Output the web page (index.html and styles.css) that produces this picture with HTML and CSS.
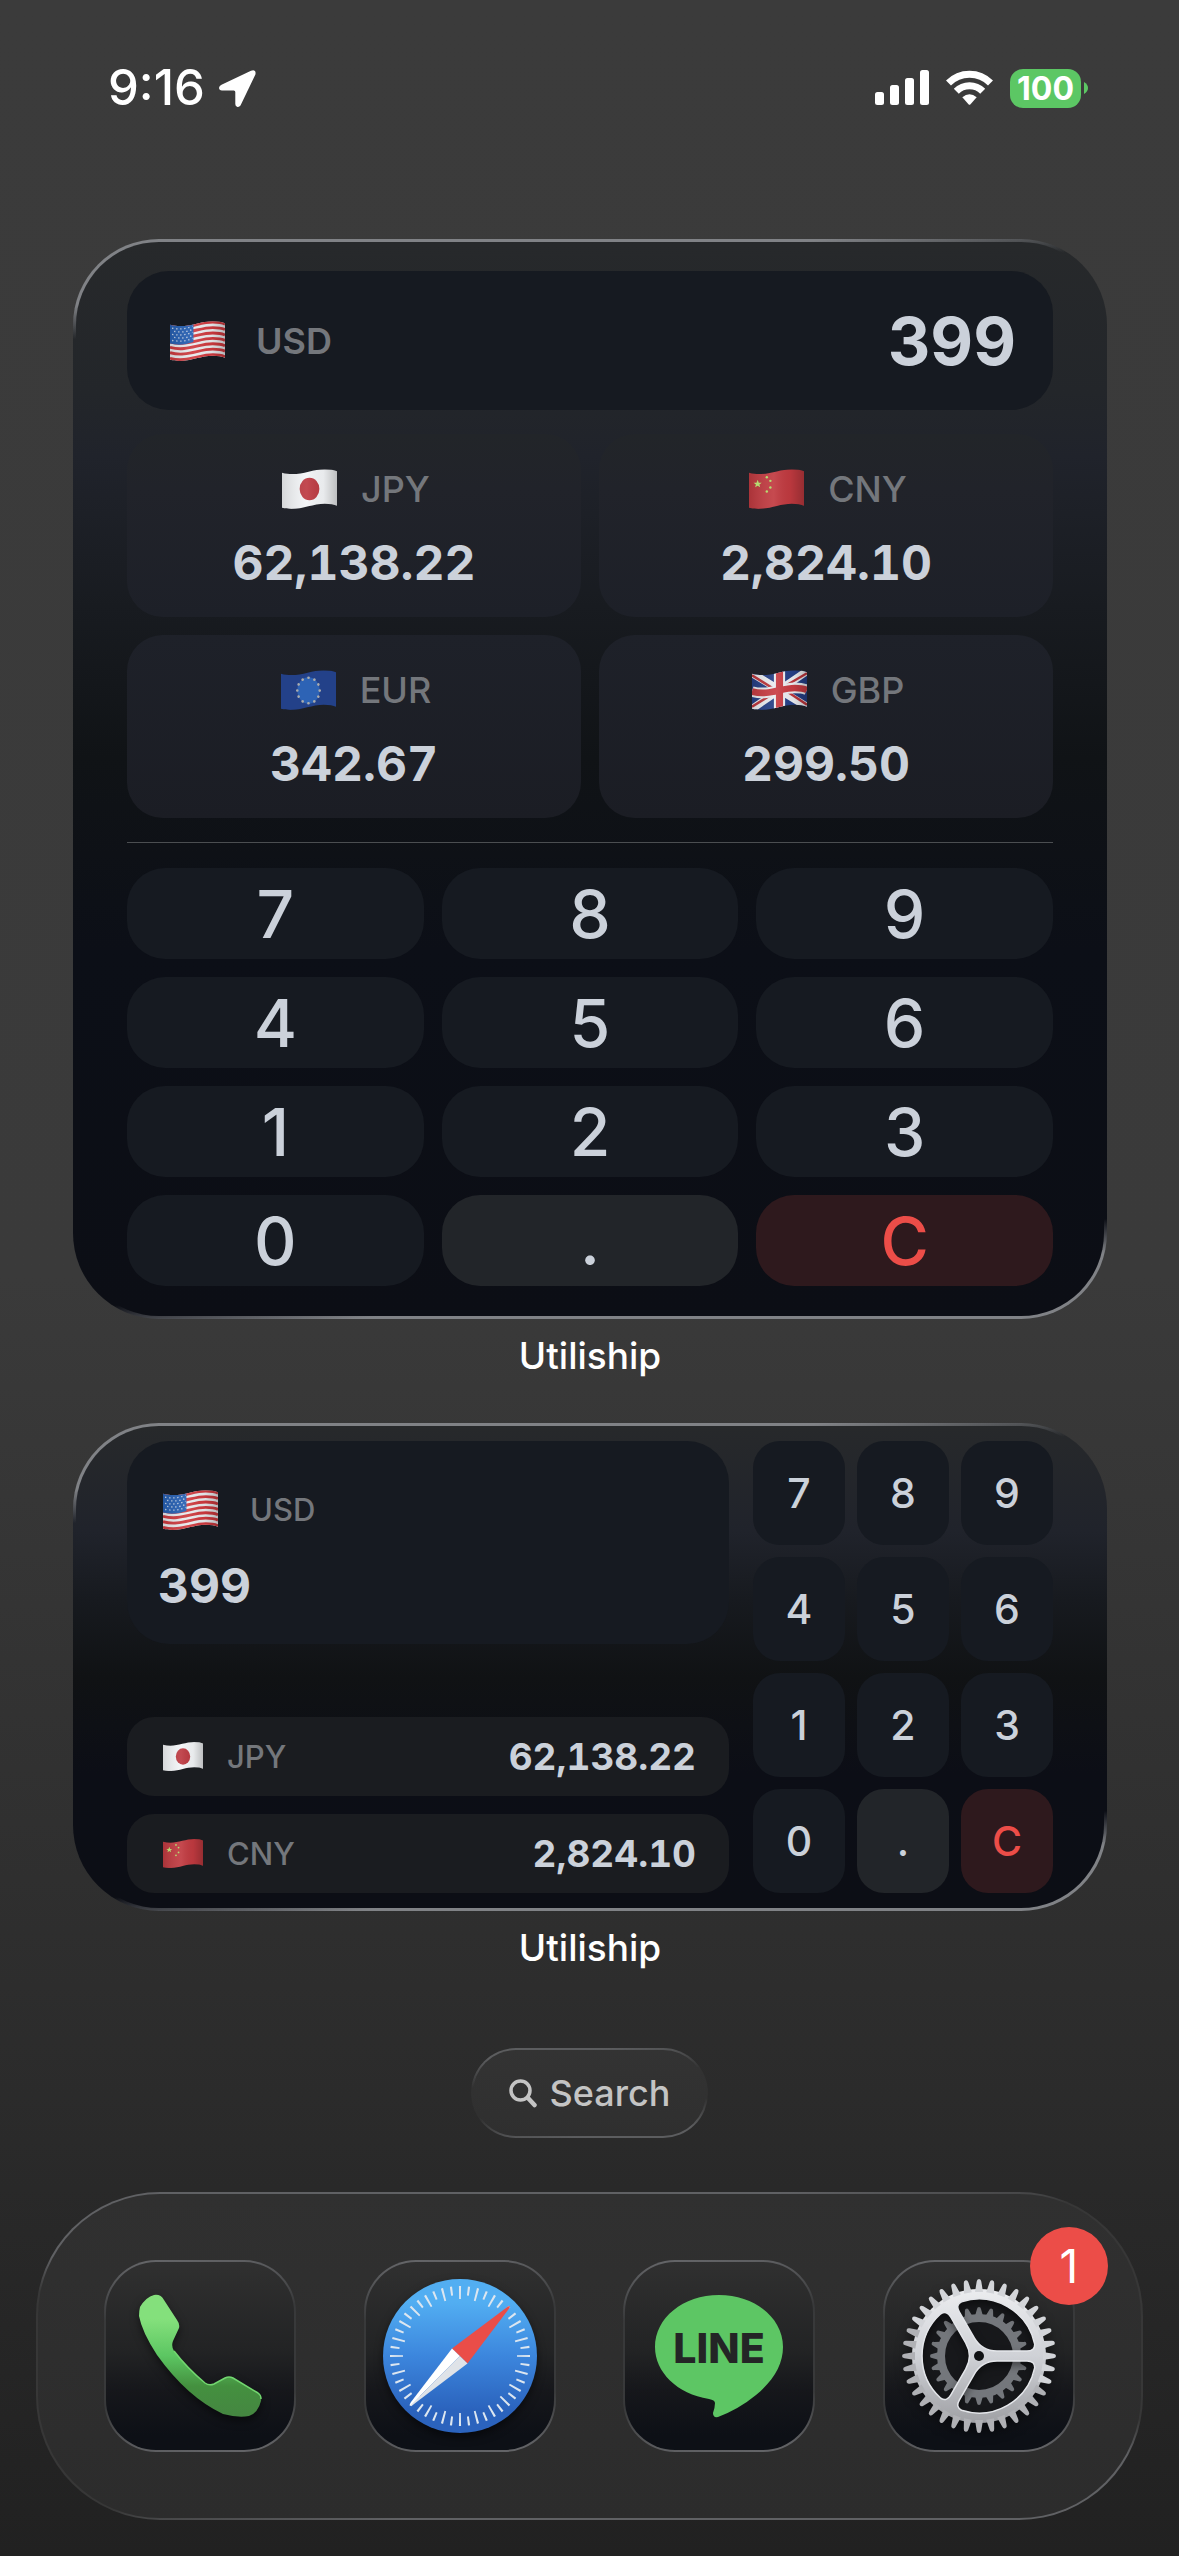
FILE: index.html
```html
<!DOCTYPE html>
<html lang="en">
<head>
<meta charset="utf-8">
<meta name="viewport" content="width=device-width, initial-scale=1">
<title>Home Screen</title>
<link rel="stylesheet" href="styles.css">
</head>
<body>
<svg class="defs" aria-hidden="true">
  <defs>
    <clipPath id="wave"><path d="M0 3.5C16 8 28 0 42 0Q50 0 54 2V36Q50 34 42 34C28 34 16 42 0 38Z"/></clipPath>
    <linearGradient id="fold"><stop offset="0" stop-color="#000" stop-opacity=".12"/><stop offset=".45" stop-color="#fff" stop-opacity=".08"/><stop offset=".75" stop-color="#000" stop-opacity=".04"/><stop offset="1" stop-color="#000" stop-opacity=".22"/></linearGradient>
    <path id="stripe" d="M0 0C16 4.500 28-3.500 42-3.500Q50-3.500 54-1.500"/>
    <path id="star" d="M0-4L1.100-1.200 4-1.200 1.700.6 2.500 3.400 0 1.700-2.500 3.400-1.700.6-4-1.200-1.100-1.200Z"/>
    <symbol id="flag-us" viewBox="0 0 54 39">
      <g clip-path="url(#wave)">
        <rect width="54" height="39" fill="#e9ebee"/>
        <g fill="none" stroke="#cf3a3f" stroke-width="2.800">
          <use href="#stripe" y="4.500"/><use href="#stripe" y="9.800"/><use href="#stripe" y="15.100"/><use href="#stripe" y="20.400"/><use href="#stripe" y="25.700"/><use href="#stripe" y="31"/><use href="#stripe" y="36.500"/>
        </g>
        <path d="M0 2C8 6 16 5 23 2V20.500C16 23 8 24 0 22Z" fill="#2660b4"/>
        <g fill="none" stroke="#c5d3e8" stroke-width="1.300" stroke-dasharray="1.300 2.700">
          <path d="M2 7C9 8 15 8 22 5"/><path d="M4 10C10 11 16 11 22 8"/><path d="M2 13C9 14 15 14 22 11"/><path d="M4 16C10 17 16 17 22 14"/><path d="M2 19C9 20 15 20 22 17"/>
        </g>
        <rect width="54" height="39" fill="url(#fold)"/>
      </g>
    </symbol>
    <symbol id="flag-jp" viewBox="0 0 54 39">
      <g clip-path="url(#wave)"><rect width="54" height="39" fill="#f3f5f7"/><ellipse cx="27" cy="19.500" rx="9.700" ry="11" fill="#bd3a42"/><rect width="54" height="39" fill="url(#fold)"/></g>
    </symbol>
    <symbol id="flag-cn" viewBox="0 0 54 39">
      <g clip-path="url(#wave)"><rect width="54" height="39" fill="#c13a40"/><rect width="54" height="39" fill="url(#fold)"/>
        <g fill="#b5dc72"><use href="#star" x="8.500" y="14.500"/><circle cx="17.500" cy="8" r="1.200"/><circle cx="21" cy="11.500" r="1.200"/><circle cx="21" cy="18" r="1.200"/><circle cx="17.500" cy="22" r="1.200"/></g></g>
    </symbol>
    <symbol id="flag-eu" viewBox="0 0 54 39">
      <g clip-path="url(#wave)"><rect width="54" height="39" fill="#234189"/><ellipse cx="27" cy="20" rx="11" ry="13" fill="#2d63b5"/>
        <ellipse cx="27" cy="20" rx="11" ry="12.500" fill="none" stroke="#a9abad" stroke-width="2.600" stroke-linecap="round" pathLength="120" stroke-dasharray=".1 9.900"/></g>
    </symbol>
    <symbol id="flag-gb" viewBox="0 0 54 39">
      <g clip-path="url(#wave)"><rect width="54" height="39" fill="#253f86"/>
        <path d="M0 3L54 36M0 38L54 1" stroke="#eceef1" stroke-width="7.500"/>
        <path d="M0 5L24 20M30 18L54 34M0 36L24 21M30 17L54 3" stroke="#bd363c" stroke-width="2.400"/>
        <path d="M27-1V40" stroke="#eceef1" stroke-width="11"/><use href="#stripe" y="21" fill="none" stroke="#eceef1" stroke-width="10.500"/>
        <path d="M27-1V40" stroke="#c93c42" stroke-width="7"/><use href="#stripe" y="21" fill="none" stroke="#c93c42" stroke-width="6.500"/>
        <rect width="54" height="39" fill="url(#fold)"/></g>
    </symbol>
  </defs>
</svg>

<div class="screen">
  <header class="status">
    <div class="status-side status-time">
      <time class="clock">9:16</time>
      <svg class="location" viewBox="0 0 37 37"><path fill="#fff" d="M2.500 14.800L32 .800Q37.500-1 36.400 4.500L21.500 35.500Q20 37.500 18 36.800Q16.300 36.300 16.300 34V22Q16.300 20.500 14.800 20.500H3Q-.2 20 .1 17.500Q.3 15.800 2.500 14.800Z"/></svg>
    </div>
    <div class="status-side">
      <svg class="signal" viewBox="0 0 54 36" fill="#fff"><rect y="22" width="9" height="13" rx="2.500"/><rect x="15" y="15" width="9" height="20" rx="2.500"/><rect x="30" y="8" width="9" height="27" rx="2.500"/><rect x="45" width="9" height="35" rx="2.500"/></svg>
      <svg class="wifi" viewBox="0 0 47 36"><g fill="none" stroke="#fff" stroke-width="7"><path d="M2.500 13A29.500 29.500 0 0 1 44.500 13"/><path d="M10.300 21.300A18.500 18.500 0 0 1 36.700 21.300"/></g><path fill="#fff" d="M16.300 27.300Q23.500 21.300 30.700 27.300L24.500 34.200Q23.500 35.200 22.500 34.200Z"/></svg>
      <div class="battery"><span class="battery-level">100</span><svg class="battery-tip" viewBox="0 0 4 12"><path fill="#5cc764" d="M0 0Q4 2.500 4 6T0 12Z"/></svg></div>
    </div>
  </header>

  <main class="widgets">
    <section class="widget-block">
      <div class="widget glass widget-large">
        <div class="base-card">
          <svg class="flag"><use href="#flag-us"/></svg>
          <span class="code code-strong">USD</span>
          <output class="amount">399</output>
        </div>
        <div class="rates">
          <div class="rate"><div class="rate-name"><svg class="flag"><use href="#flag-jp"/></svg><span class="code">JPY</span></div><span class="rate-value">62,138.22</span></div>
          <div class="rate"><div class="rate-name"><svg class="flag"><use href="#flag-cn"/></svg><span class="code">CNY</span></div><span class="rate-value">2,824.10</span></div>
          <div class="rate rate-low"><div class="rate-name"><svg class="flag"><use href="#flag-eu"/></svg><span class="code">EUR</span></div><span class="rate-value">342.67</span></div>
          <div class="rate rate-low"><div class="rate-name"><svg class="flag"><use href="#flag-gb"/></svg><span class="code">GBP</span></div><span class="rate-value">299.50</span></div>
        </div>
        <hr class="divider">
        <div class="keypad">
          <button class="key">7</button><button class="key">8</button><button class="key">9</button>
          <button class="key">4</button><button class="key">5</button><button class="key">6</button>
          <button class="key">1</button><button class="key">2</button><button class="key">3</button>
          <button class="key">0</button><button class="key key-dot">.</button><button class="key key-clear">C</button>
        </div>
      </div>
      <p class="widget-label">Utiliship</p>
    </section>

    <section class="widget-block">
      <div class="widget glass widget-medium">
        <div class="converter">
          <div class="base-panel">
            <div class="base-name"><svg class="flag"><use href="#flag-us"/></svg><span class="code code-small">USD</span></div>
            <output class="rate-value">399</output>
          </div>
          <div class="rows">
            <div class="row"><svg class="flag flag-small"><use href="#flag-jp"/></svg><span class="code code-small">JPY</span><span class="row-value">62,138.22</span></div>
            <div class="row"><svg class="flag flag-small"><use href="#flag-cn"/></svg><span class="code code-small">CNY</span><span class="row-value">2,824.10</span></div>
          </div>
        </div>
        <div class="keypad keypad-compact">
          <button class="key">7</button><button class="key">8</button><button class="key">9</button>
          <button class="key">4</button><button class="key">5</button><button class="key">6</button>
          <button class="key">1</button><button class="key">2</button><button class="key">3</button>
          <button class="key">0</button><button class="key key-dot">.</button><button class="key key-clear">C</button>
        </div>
      </div>
      <p class="widget-label">Utiliship</p>
    </section>
  </main>

  <button class="search glass">
    <svg class="search-icon" viewBox="0 0 28 29" fill="none" stroke="#c4c4c4" stroke-linecap="round"><circle cx="11.500" cy="11.500" r="9.500" stroke-width="3.500"/><path d="M19 19L25.500 26" stroke-width="4.500"/></svg>
    <span>Search</span>
  </button>

  <nav class="dock glass" aria-label="Dock">
    <a class="app glass" href="#phone" aria-label="Phone">
      <svg class="app-art" viewBox="0 0 192 192">
        <defs><linearGradient id="phone-fill" x1="0" y1="0" x2="0" y2="1"><stop offset=".2" stop-color="#84e07c"/><stop offset=".5" stop-color="#5cc662"/><stop offset=".75" stop-color="#44903f"/><stop offset="1" stop-color="#458641"/></linearGradient></defs>
        <path class="lift" fill="url(#phone-fill)" d="M36 47Q42 37 50 35Q57 34 60 40L73 60Q76 64 75 68L69 81Q67 86 70 91Q83 108 101 123Q105 126 110 124L121 118Q125 116 129 118L154 133Q158 135 157 141Q154 153 145 156Q134 158 119 154Q83 137 53 95Q38 72 35 56Q35 51 36 47Z"/>
        <path fill="none" stroke="#72d66f" stroke-width="1.500" d="M70 91Q83 108 101 123Q105 126 110 124L121 118Q125 116 129 118L154 133Q157 135 157 139"/>
      </svg>
    </a>
    <a class="app glass" href="#safari" aria-label="Safari">
      <svg class="app-art" viewBox="0 0 192 192">
        <defs><linearGradient id="sky" x1="0" y1="0" x2="0" y2="1"><stop offset=".15" stop-color="#52aef2"/><stop offset=".5" stop-color="#3c86dd"/><stop offset=".85" stop-color="#2b63bd"/></linearGradient></defs>
        <circle class="lift" cx="96" cy="96" r="77" fill="url(#sky)"/>
        <g fill="none" stroke="#dce6f0"><circle cx="96" cy="96" r="63.500" stroke-width="13" pathLength="240" stroke-dasharray="1.200 8.800" stroke-dashoffset=".6"/><circle cx="96" cy="96" r="65.500" stroke-width="9" pathLength="240" stroke-dasharray="1.200 8.800" stroke-dashoffset="5.600"/></g>
        <path fill="#ea4d48" d="M144 46.500Q146.500 45 145.500 48L103.500 103.500 88 88.500Z"/>
        <path fill="#fff" d="M88 88.500L95.800 96 46 146Q45 145.500 47 142Z"/><path fill="#dfe3e8" d="M95.800 96L103.500 103.500 48 145.500 46 146Z"/>
      </svg>
    </a>
    <a class="app glass" href="#line" aria-label="LINE">
      <svg class="app-art" viewBox="0 0 192 192">
        <path fill="#5dc664" d="M96 35C132 35 160 58 160 87C160 104 151 120 133 135Q116 149 95 157Q90 158 90 153Q92 147 92 143Q92 140 86 139C54 134 32 112 32 87C32 58 60 35 96 35Z"/>
        <text class="line-logo" x="96" y="103" text-anchor="middle">LINE</text>
      </svg>
    </a>
    <a class="app glass" href="#settings" aria-label="Settings, 1 notification">
      <svg class="app-art" viewBox="-96 -96 192 192">
        <defs>
          <linearGradient id="steel" gradientUnits="userSpaceOnUse" x1="0" y1="-77" x2="0" y2="77"><stop offset="0" stop-color="#f0f1f3"/><stop offset=".5" stop-color="#cfd1d6"/><stop offset="1" stop-color="#98999d"/></linearGradient>
          <path id="tooth" d="M-4-64L-2.300-74.500Q-2-77 0-77T2.300-74.500L4-64Z"/>
          <g id="teeth6"><use href="#tooth"/><use href="#tooth" transform="rotate(10)"/><use href="#tooth" transform="rotate(20)"/><use href="#tooth" transform="rotate(30)"/><use href="#tooth" transform="rotate(40)"/><use href="#tooth" transform="rotate(50)"/></g>
          <path id="cog" d="M-4-40L-2-47Q-1.800-49 0-49T2-47L4-40Z"/>
          <g id="cog6"><use href="#cog"/><use href="#cog" transform="rotate(15)"/><use href="#cog" transform="rotate(30)"/><use href="#cog" transform="rotate(45)"/><use href="#cog" transform="rotate(60)"/><use href="#cog" transform="rotate(75)"/></g>
          <path id="opening" d="M18-5H48Q56-5 55.700-12A57 57 0 0 0-17.500-54.200Q-23.700-51-19.700-44.100L-4.700-18.100Q2.900-5 18-5Z"/>
          <mask id="spokes" maskUnits="userSpaceOnUse" x="-96" y="-96" width="192" height="192"><circle r="90" fill="#fff"/><use href="#opening"/><use href="#opening" transform="rotate(120)"/><use href="#opening" transform="rotate(240)"/><circle r="5"/></mask>
        </defs>
        <circle r="57" fill="#17181b"/>
        <g fill="#74777c"><use href="#cog6"/><use href="#cog6" transform="rotate(90)"/><use href="#cog6" transform="rotate(180)"/><use href="#cog6" transform="rotate(270)"/><circle r="38" fill="none" stroke="#74777c" stroke-width="8"/></g>
        <g class="lift"><g fill="url(#steel)" mask="url(#spokes)"><circle r="67"/><g fill="#d3d5d9"><use href="#teeth6"/><use href="#teeth6" transform="rotate(60)"/><use href="#teeth6" transform="rotate(300)"/></g><g fill="#b0b1b5"><use href="#teeth6" transform="rotate(120)"/><use href="#teeth6" transform="rotate(180)"/><use href="#teeth6" transform="rotate(240)"/></g></g></g>
        <g fill="none" stroke="#e4e6ea" stroke-width="1.500"><use href="#opening"/><use href="#opening" transform="rotate(120)"/><use href="#opening" transform="rotate(240)"/></g>
      </svg>
      <span class="badge">1</span>
    </a>
  </nav>
</div>
</body>
</html>
```
FILE: styles.css
```css
* { box-sizing: border-box; }

body {
  margin: 0;
  background: #222;
  color: #cbd1da;
  font-family: Inter, "Liberation Sans", sans-serif;
}

button {
  border: 0;
  padding: 0;
  color: inherit;
  font: inherit;
}

.defs {
  position: absolute;
  width: 0;
  height: 0;
}

.screen {
  display: flex;
  flex-direction: column;
  min-height: 100vh;
  padding: 60px 36px 36px;
  background: linear-gradient(#3b3b3b 0%, #3a3a3a 50%, #2b2b2b 82%, #212121 100%);
}

/* Status bar */
.status {
  display: flex;
  justify-content: space-between;
  align-items: center;
  height: 56px;
  padding: 0 55px 0 72px;
  color: #fff;
}

.status-side {
  display: flex;
  align-items: center;
  gap: 17px;
}

.status-time { gap: 14px; }

.clock {
  font-size: 49px;
  font-weight: 500;
  line-height: 56px;
}

.location { width: 37px; height: 37px; }
.signal { width: 54px; height: 36px; }
.wifi { width: 47px; height: 36px; }

.battery {
  display: flex;
  align-items: center;
  gap: 3px;
}

.battery-level {
  width: 71px;
  border-radius: 13px;
  background: #5cc764;
  font-size: 32px;
  font-weight: 700;
  line-height: 39px;
  text-align: center;
}

.battery-tip { width: 4px; height: 12px; }

/* Glass surfaces: highlight along the top-left and bottom-right edges */
.glass {
  --edge: #808286;
  --side: transparent;
  --fill: linear-gradient(#303030, #2c2c2c);
  --hold: 66px;
  --fade: 100px;
  border: 2px solid transparent;
  background:
    var(--fill) padding-box,
    linear-gradient(175deg, var(--edge) 0, var(--edge) var(--hold), var(--side) var(--fade), var(--side) calc(100% - var(--fade)), var(--edge) calc(100% - var(--hold)), var(--edge) 100%) border-box,
    var(--fill) border-box;
}

/* Widgets */
.widgets { padding: 123px 36px 0 37px; }

.widget-block { margin-bottom: 29px; }

.widget {
  border-width: 3px;
  border-radius: 86px;
}

.widget-large {
  --fill: linear-gradient(#27292b 0%, #23262a 14%, #20232b 20%, #181b20 34%, #101316 48%, #0c0f17 66%, #0c0e15 100%);
  padding: 29px 51px 30px;
}

.widget-medium {
  --fill: linear-gradient(#27292b 0%, #20232b 22%, #171a1f 36%, #101214 52%, #0c0e16 72%, #0c0e15 100%);
  display: grid;
  grid-template-columns: 1fr 300px;
  gap: 24px;
  padding: 15px 51px;
}

.widget-label {
  margin: 0;
  padding: 13px 0 14px;
  color: #fff;
  font-size: 37px;
  font-weight: 500;
  line-height: 48px;
  text-align: center;
}

.flag {
  flex: none;
  width: 55px;
  height: 40px;
}

.flag-small {
  width: 40px;
  height: 29px;
}

.code {
  color: #74777c;
  font-size: 36px;
  font-weight: 500;
  line-height: 44px;
}

.code-strong { font-weight: 600; }
.code-small { font-size: 31px; }

.base-card {
  display: flex;
  align-items: center;
  gap: 31px;
  height: 139px;
  padding: 0 37px 0 43px;
  border-radius: 42px;
  background: #161a21;
}

.amount {
  margin-left: auto;
  font-size: 66px;
  font-weight: 700;
}

.rates {
  display: grid;
  grid-template-columns: 1fr 1fr;
  gap: 18px;
  margin: 24px 0;
}

.rate {
  display: flex;
  flex-direction: column;
  align-items: center;
  gap: 24px;
  padding: 33px 0 26px;
  border-radius: 36px;
  background: linear-gradient(#222529, #21232a 30%, #1d2028);
}

.rate-low { background: linear-gradient(#1e2129, #1b1d24); }

.rate-name {
  display: flex;
  align-items: center;
  gap: 24px;
  padding-left: 4px;
}

.rate-value,
.row-value {
  font-size: 48px;
  font-weight: 650;
  font-variant-numeric: tabular-nums;
  line-height: 56px;
}

.divider {
  height: 1px;
  margin: 0 0 25px;
  border: 0;
  background: #4b4e51;
}

.keypad {
  display: grid;
  grid-template-columns: repeat(3, 1fr);
  grid-auto-rows: 91px;
  gap: 18px;
}

.key {
  border-radius: 38px;
  background: #161a21;
  font-size: 66px;
  font-weight: 500;
  line-height: 80px;
}

.key-dot { background: #222529; }

.key-clear {
  background: #2e191d;
  color: #ec4d48;
}

.keypad-compact {
  grid-auto-rows: 104px;
  gap: 12px;
}

.keypad-compact .key {
  border-radius: 27px;
  font-size: 41px;
}

.converter {
  display: flex;
  flex-direction: column;
  justify-content: space-between;
}

.base-panel {
  display: flex;
  flex-direction: column;
  gap: 26px;
  padding: 47px 31px 30px;
  border-radius: 42px;
  background: #161a21;
}

.base-name {
  display: flex;
  align-items: center;
  gap: 32px;
  padding-left: 5px;
}

.rows {
  display: grid;
  gap: 18px;
}

.row {
  display: flex;
  align-items: center;
  gap: 24px;
  height: 79px;
  padding: 0 33px 0 36px;
  border-radius: 27px;
  background: #1a1c20;
}

.row-value {
  margin-left: auto;
  font-size: 37px;
}

/* Search and dock */
.search {
  --edge: #5c5d5f;
  --fill: linear-gradient(#333, #2f2f2f);
  --hold: 12px;
  --fade: 40px;
  display: flex;
  align-items: center;
  align-self: center;
  gap: 13px;
  height: 90px;
  padding: 0 36px;
  margin-top: 33px;
  border-radius: 45px;
  color: #c4c4c4;
  font-size: 36px;
  font-weight: 500;
}

.search-icon { width: 28px; height: 29px; }

.dock {
  --edge: #606164;
  --side: #373737;
  display: flex;
  justify-content: space-between;
  margin-top: auto;
  padding: 66px;
  border-radius: 124px;
}

.app {
  --edge: #636467;
  --side: #38393a;
  --fill: linear-gradient(#303030, #222324 48%, #16171b 68%, #0d1016 92%);
  --hold: 6px;
  --fade: 60px;
  position: relative;
  width: 192px;
  height: 192px;
  border-radius: 52px;
  color: inherit;
  text-decoration: none;
}

.app-art {
  display: block;
  width: 192px;
  height: 192px;
  margin: -2px;
}

.lift { filter: drop-shadow(0 4px 4px rgba(0, 0, 0, .5)); }

.line-logo {
  fill: #242526;
  font-size: 41px;
  font-weight: 800;
}

.badge {
  position: absolute;
  top: -35px;
  right: -35px;
  width: 78px;
  height: 78px;
  border-radius: 50%;
  background: #ec4d48;
  color: #fff;
  font-size: 46px;
  line-height: 78px;
  text-align: center;
}
```
